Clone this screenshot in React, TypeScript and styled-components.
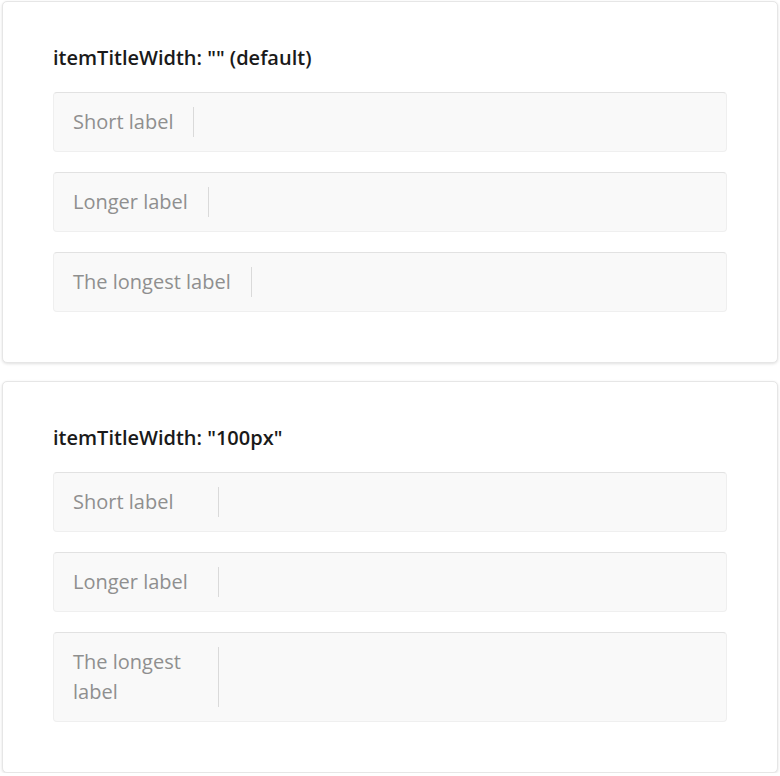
import React from "react";
import styled, { createGlobalStyle } from "styled-components";

const GlobalStyle = createGlobalStyle`
  html, body {
    margin: 0;
    padding: 0;
    background: #ffffff;
  }
  body {
    font-family: "Open Sans", "Noto Sans", sans-serif;
  }
`;

const Page = styled.div`
  display: flex;
  flex-direction: column;
  gap: 18px;
  padding: 1px 2px 0 2px;
`;

const Card = styled.section`
  background: #fff;
  border: 1px solid #e6e6e6;
  border-radius: 5px;
  box-shadow: 0 1px 3px rgba(0, 0, 0, 0.12);
  padding: 42px 50px 50px 50px;
`;

const Title = styled.h3`
  margin: 0 0 21px 0;
  font-size: 20px;
  line-height: 27px;
  font-weight: 600;
  color: #1a1a1a;
`;

const List = styled.div`
  display: flex;
  flex-direction: column;
  gap: 20px;
`;

const Row = styled.div`
  display: flex;
  align-items: stretch;
  background: #f9f9f9;
  border: 1px solid #efefef;
  border-top-color: #e2e2e2;
  border-radius: 4px;
  padding: 14px 19px;
`;

const Label = styled.div<{ $width?: string }>`
  flex: none;
  ${(p) => (p.$width ? `width: ${p.$width};` : "")}
  padding-right: 20px;
  border-right: 1px solid #dadada;
  font-size: 20px;
  line-height: 30px;
  color: #8f8f8f;
`;

const labels = ["Short label", "Longer label", "The longest label"];

const Demo = ({ title, width }: { title: string; width?: string }) => (
  <Card>
    <Title>{title}</Title>
    <List>
      {labels.map((l) => (
        <Row key={l}>
          <Label $width={width}>{l}</Label>
        </Row>
      ))}
    </List>
  </Card>
);

export default function App() {
  return (
    <>
      <GlobalStyle />
      <Page>
        <Demo title={'itemTitleWidth: "" (default)'} />
        <Demo title={'itemTitleWidth: "100px"'} width="125px" />
      </Page>
    </>
  );
}
